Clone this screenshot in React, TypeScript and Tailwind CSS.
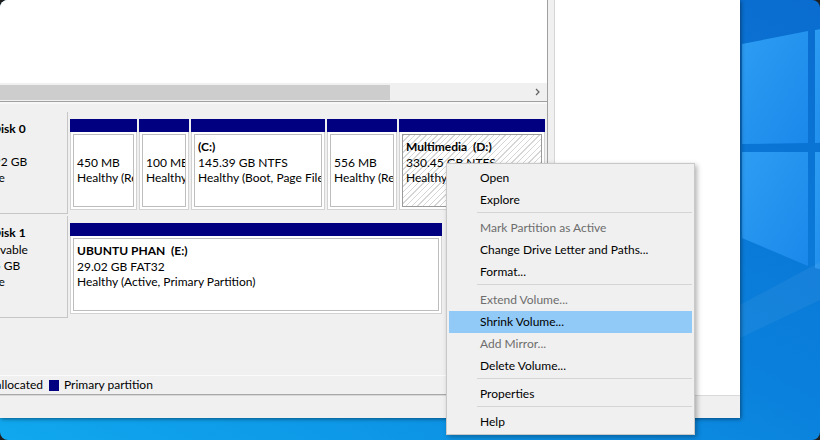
import React from 'react';

type Part = {
  width: string;
  name?: string;
  size: string;
  status: string;
  selected?: boolean;
};

const disk0: Part[] = [
  { width: 'w-[67px]', size: '450 MB', status: 'Healthy (Recovery Partition)' },
  { width: 'w-[50px]', size: '100 MB', status: 'Healthy (EFI System Partition)' },
  { width: 'w-[134px]', name: '(C:)', size: '145.39 GB NTFS', status: 'Healthy (Boot, Page File, Crash Dump, Primary Partition)' },
  { width: 'w-[70px]', size: '556 MB', status: 'Healthy (Recovery Partition)' },
  { width: 'w-[146px]', name: 'Multimedia  (D:)', size: '330.45 GB NTFS', status: 'Healthy (Primary Partition)', selected: true },
];

const disk1: Part[] = [
  { width: 'w-[372px]', name: 'UBUNTU PHAN  (E:)', size: '29.02 GB FAT32', status: 'Healthy (Active, Primary Partition)' },
];

type MenuItem = { label: string; disabled?: boolean; active?: boolean } | 'sep';

const menu: MenuItem[] = [
  { label: 'Open' },
  { label: 'Explore' },
  'sep',
  { label: 'Mark Partition as Active', disabled: true },
  { label: 'Change Drive Letter and Paths...' },
  { label: 'Format...' },
  'sep',
  { label: 'Extend Volume...', disabled: true },
  { label: 'Shrink Volume...', active: true },
  { label: 'Add Mirror...', disabled: true },
  { label: 'Delete Volume...' },
  'sep',
  { label: 'Properties' },
  'sep',
  { label: 'Help' },
];

function Wallpaper() {
  return (
    <svg className="absolute inset-0" width="820" height="440" viewBox="0 0 820 440">
      <defs>
        <linearGradient id="wp" x1="0" y1="1" x2="1" y2="0">
          <stop offset="0" stopColor="#10a8ee" />
          <stop offset="0.55" stopColor="#0a80dc" />
          <stop offset="1" stopColor="#0a6ccf" />
        </linearGradient>
        <linearGradient id="pane" x1="0" y1="0" x2="1" y2="1">
          <stop offset="0" stopColor="#2d9df3" />
          <stop offset="1" stopColor="#1a88ea" />
        </linearGradient>
      </defs>
      <rect width="820" height="440" fill="url(#wp)" />
      <polygon points="742,44 808,31 808,143 742,144" fill="url(#pane)" />
      <polygon points="742,152 808,152 808,266 742,238" fill="url(#pane)" />
      <polygon points="815,30 830,28 830,142 815,143" fill="url(#pane)" />
      <polygon points="815,152 830,152 830,272 815,268" fill="url(#pane)" />
      <polygon points="740,305 820,262 820,300 740,338" fill="#ffffff" opacity="0.05" />
    </svg>
  );
}

function DiskIcon() {
  return (
    <svg width="18" height="14" viewBox="0 0 18 14">
      <rect x="1" y="3" width="16" height="8" fill="#bdbdbd" stroke="#6b6b6b" />
      <rect x="12" y="6" width="3" height="2" fill="#3a9a3a" />
    </svg>
  );
}

function DiskLabel({ lines }: { lines: string[] }) {
  return (
    <div className="w-[68px] shrink-0 bg-[#f0f0f0] border-r border-b border-[#c6c6c6] overflow-hidden pt-[8px]">
      <div className="ml-[-30px] whitespace-nowrap">
        <div className="h-[18px] flex items-center gap-[4px]">
          <DiskIcon />
          <span className="font-bold">{lines[0]}</span>
        </div>
        {lines.slice(1).map((l) => (
          <div key={l} className="leading-[16px]">{l}</div>
        ))}
      </div>
    </div>
  );
}

function Partition({ p }: { p: Part }) {
  return (
    <div className={`${p.width} shrink-0 flex flex-col`}>
      <div className="h-[13px] bg-[#000080]" />
      <div className="h-[78px] bg-white border-x border-b border-[#d2d2d2] p-[2px]">
        <div
          className={
            p.selected
              ? 'h-full border border-[#9a9a9a] overflow-hidden pl-[3px] pt-[4px] bg-[repeating-linear-gradient(135deg,#d6d6d6_0px,#d6d6d6_1px,#ffffff_1px,#ffffff_4px)]'
              : 'h-full border border-[#bdbdbd] overflow-hidden pl-[3px] pt-[4px] bg-white'
          }
        >
          <div className="leading-[15.5px] whitespace-pre font-bold h-[15.5px]">{p.name ?? ''}</div>
          <div className="leading-[15.5px] whitespace-nowrap">{p.size}</div>
          <div className="leading-[15.5px] whitespace-nowrap">{p.status}</div>
        </div>
      </div>
    </div>
  );
}

function DiskRow({ label, parts }: { label: string[]; parts: Part[] }) {
  return (
    <div className="h-[102px] flex shrink-0">
      <DiskLabel lines={label} />
      <div className="ml-[2px] pt-[7px] flex gap-[2px]">
        {parts.map((p) => (
          <Partition key={p.size + p.status} p={p} />
        ))}
      </div>
    </div>
  );
}

function ContextMenu() {
  return (
    <div className="absolute left-[446px] top-[163px] w-[249px] h-[272px] bg-[#f0f0f0] border border-[#c8c8c8] shadow-[2px_2px_5px_rgba(0,0,0,0.3)] pt-[3px] pb-[1px] px-[2px]">
      {menu.map((m, i) =>
        m === 'sep' ? (
          <div key={i} className="h-[6px] pt-[1px] ml-[28px]">
            <div className="h-px bg-[#d5d5d5]" />
          </div>
        ) : (
          <div
            key={i}
            className={`h-[22px] flex items-center pl-[31px] whitespace-nowrap ${m.active ? 'bg-[#91c9f7]' : ''} ${m.disabled ? 'text-[#6d6d6d]' : 'text-black'}`}
          >
            {m.label}
          </div>
        )
      )}
    </div>
  );
}

export default function App() {
  return (
    <div className="w-[820px] h-[440px] bg-[#1e1e1e]">
      <div className="relative w-full h-full rounded-[8px] overflow-hidden font-['Lato',sans-serif] text-[12px] text-black">
        <Wallpaper />

        {/* management console window */}
        <div className="absolute left-0 top-0 w-[740px] h-[418px] flex flex-col bg-[#f0f0f0] shadow-[1px_1px_4px_rgba(0,0,0,0.45)]">
          <div className="flex h-[395px]">
            <div className="w-[548px] flex flex-col border-r border-[#a0a0a0]">
              <div className="h-[83px] bg-white" />
              <div className="h-[18px] bg-[#f0f0f0] flex items-center">
                <div className="w-[390px] h-[15px] bg-[#cdcdcd]" />
                <div className="flex-1" />
                <svg width="6" height="8" viewBox="0 0 6 8" className="mr-[6px]">
                  <polyline points="1,1 4,4 1,7" fill="none" stroke="#606060" strokeWidth="1.2" />
                </svg>
              </div>
              <div className="h-[3px] border-t border-[#a0a0a0] bg-[#f7f7f7]" />
              <div className="flex-1 bg-[#f0f0f0] pt-[8px] flex flex-col gap-[2px] overflow-hidden">
                <DiskRow label={['Disk 0', 'Basic', '476.92 GB', 'Online']} parts={disk0} />
                <DiskRow label={['Disk 1', 'Removable', '29.05 GB', 'Online']} parts={disk1} />
              </div>
              <div className="h-[20px] bg-[#f0f0f0] border-t border-[#fbfbfb] border-b border-b-[#a8a8a8] flex items-center overflow-hidden whitespace-nowrap">
                <div className="w-[43px] shrink-0 flex justify-end">
                  <span className="w-[10px] h-[11px] bg-black shrink-0 mr-[5px]" />
                  <span className="shrink-0">Unallocated</span>
                </div>
                <span className="w-[10px] h-[11px] bg-[#000080] ml-[6px] shrink-0" />
                <span className="ml-[5px]">Primary partition</span>
              </div>
            </div>
            <div className="w-[6px] bg-[#f0f0f0]" />
            <div className="flex-1 bg-white border-l border-[#d6d6d6]" />
          </div>
          <div className="h-[23px] bg-[#f0f0f0] border-t border-[#d9d9d9]" />
        </div>

        <ContextMenu />
      </div>
    </div>
  );
}
